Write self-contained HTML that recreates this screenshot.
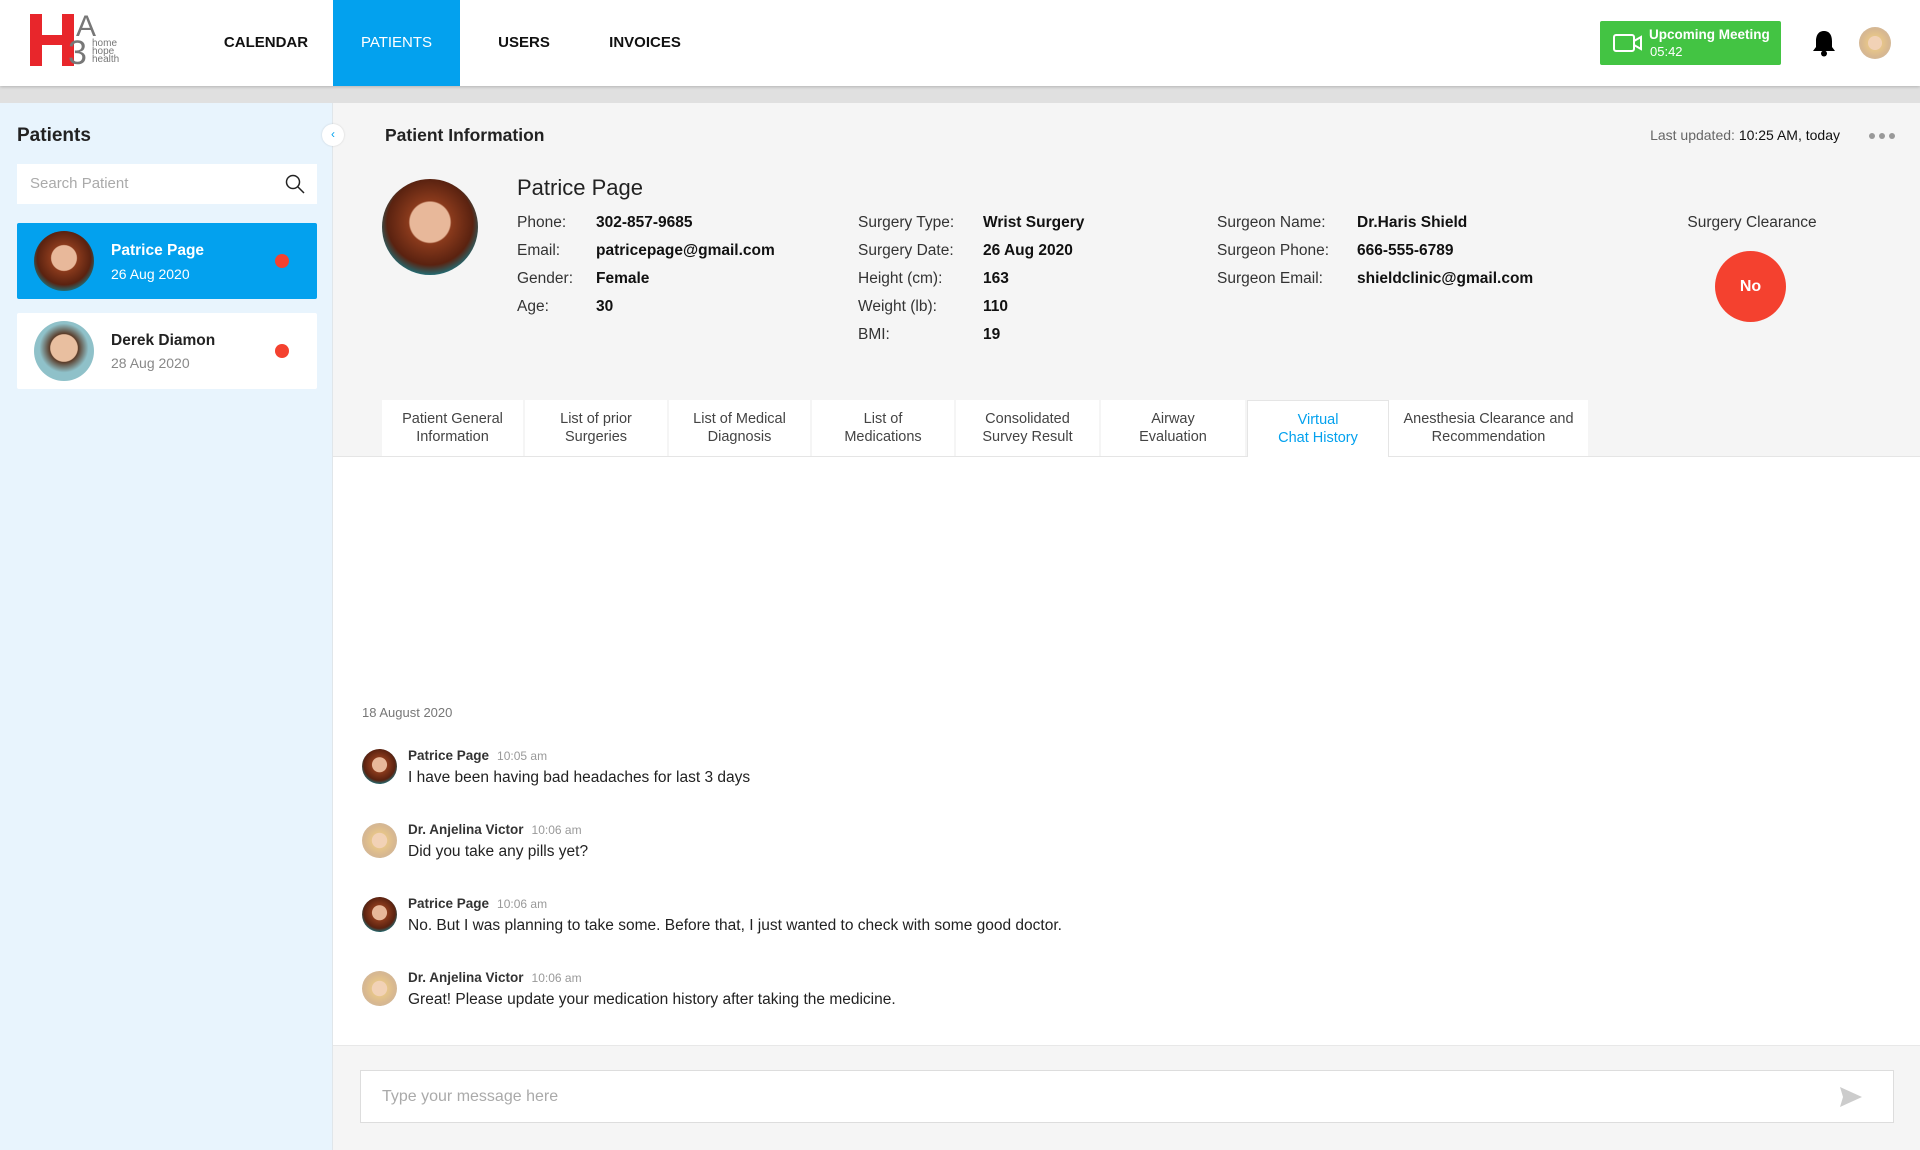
<!DOCTYPE html>
<html><head><meta charset="utf-8"><style>
*{box-sizing:border-box;margin:0;padding:0}
body{width:1920px;height:1150px;overflow:hidden;font-family:"Liberation Sans",sans-serif;background:#f5f5f5;position:relative;color:#222}
.abs{position:absolute}
.hdr{left:0;top:0;width:1920px;height:86px;background:#fff;box-shadow:0 1px 3px rgba(0,0,0,.2);z-index:2}
.nav{top:0;height:86px;line-height:86px;font-size:15px;font-weight:bold;color:#111;text-align:center}
.band{left:0;top:86px;width:1920px;height:17px;background:#e0e0e0}
.side{left:0;top:103px;width:333px;height:1047px;background:#e8f4fd;border-right:1px solid #e0e6ea}
.av{border-radius:50%}
.pp{background:radial-gradient(circle at 50% 45%,#e8b89a 0 28%,#8a3a1c 30%,#5a2210 60%,#1f6f78 75%,#2a2a2a 100%)}
.dd{background:radial-gradient(circle at 50% 45%,#e9bfa0 0 30%,#5a3b28 32%,#8fc1c9 55%,#8fc1c9 100%)}
.dr{background:radial-gradient(circle at 50% 50%,#f2d2b6 0 30%,#e6c58a 32%,#d8b890 60%,#c9b8a8 100%)}
.card{left:17px;width:300px;height:76px;border-radius:2px}
.dot{width:14px;height:14px;border-radius:50%;background:#f4412f}
.lbl{font-size:15.5px;color:#333}
.val{font-size:15.5px;font-weight:bold;color:#111}
.tab{top:400px;height:56px;background:#fff;font-size:14.5px;color:#444;text-align:center;display:flex;align-items:center;justify-content:center;line-height:18px;border-right:2px solid #f5f5f5}
.name{font-size:13.5px;font-weight:bold;color:#333}
.tm{font-size:12px;color:#999;font-weight:normal;margin-left:8px}
.msg{font-size:15.5px;color:#222}
</style></head><body>
<div class="abs hdr">
  <div class="abs" style="left:30px;top:14px;width:100px;height:54px">
    <div class="abs" style="left:0;top:0;width:12px;height:52px;background:#e8262b"></div>
    <div class="abs" style="left:32px;top:0;width:12px;height:52px;background:#e8262b"></div>
    <div class="abs" style="left:0;top:21px;width:44px;height:10px;background:#e8262b"></div>
    <div class="abs" style="left:46px;top:-4px;font-size:30px;color:#777">A</div>
    <div class="abs" style="left:38px;top:20px;font-size:34px;color:#777">3</div>
    <div class="abs" style="left:62px;top:26px;font-size:10px;line-height:8px;color:#777">home<br>hope<br>health</div>
  </div>
  <div class="abs nav" style="left:220px;width:92px">CALENDAR</div>
  <div class="abs nav" style="left:333px;width:127px;background:#03a1ee;color:#fff;font-weight:normal">PATIENTS</div>
  <div class="abs nav" style="left:490px;width:68px">USERS</div>
  <div class="abs nav" style="left:605px;width:80px">INVOICES</div>
  <div class="abs" style="left:1600px;top:21px;width:181px;height:44px;background:#43c443;border-radius:2px;color:#fff">
    <svg class="abs" style="left:13px;top:12px" width="30" height="20" viewBox="0 0 30 20"><rect x="1" y="2" width="20" height="16" rx="2" fill="none" stroke="#fff" stroke-width="2"/><path d="M21 8 L28 4 V16 L21 12" fill="none" stroke="#fff" stroke-width="2"/></svg>
    <div class="abs" style="left:49px;top:6px;font-size:13.5px;font-weight:bold">Upcoming Meeting</div>
    <div class="abs" style="left:50px;top:23px;font-size:13px">05:42</div>
  </div>
  <svg class="abs" style="left:1812px;top:29px" width="24" height="28" viewBox="0 0 24 28"><path d="M12 2 C6 2 4 7 4 12 V18 L1 22 H23 L20 18 V12 C20 7 18 2 12 2Z" fill="#000"/><circle cx="12" cy="24.5" r="3" fill="#000"/></svg>
  <div class="abs av dr" style="left:1859px;top:27px;width:32px;height:32px"></div>
</div>
<div class="abs band"></div>
<div class="abs side">
  <div class="abs" style="left:17px;top:22px;font-size:19px;font-weight:bold;color:#222">Patients</div>
  <div class="abs" style="left:17px;top:61px;width:300px;height:40px;background:#fff">
    <div class="abs" style="left:13px;top:11px;font-size:15px;color:#aaa">Search Patient</div>
    <svg class="abs" style="left:268px;top:10px" width="20" height="20" viewBox="0 0 20 20"><circle cx="8" cy="8" r="6.5" fill="none" stroke="#222" stroke-width="1.5"/><path d="M13 13 L19 19" stroke="#222" stroke-width="1.5"/></svg>
  </div>
  <div class="abs card" style="top:120px;background:#03a1ee">
    <div class="abs av pp" style="left:17px;top:8px;width:60px;height:60px"></div>
    <div class="abs" style="left:94px;top:19px;font-size:15.5px;font-weight:bold;color:#fff">Patrice Page</div>
    <div class="abs" style="left:94px;top:43px;font-size:14px;color:#fff">26 Aug 2020</div>
    <div class="abs dot" style="left:258px;top:31px"></div>
  </div>
  <div class="abs card" style="top:210px;background:#fff">
    <div class="abs av dd" style="left:17px;top:8px;width:60px;height:60px"></div>
    <div class="abs" style="left:94px;top:19px;font-size:15.5px;font-weight:bold;color:#222">Derek Diamon</div>
    <div class="abs" style="left:94px;top:42px;font-size:14px;color:#888">28 Aug 2020</div>
    <div class="abs dot" style="left:258px;top:31px"></div>
  </div>
</div>
<div class="abs" style="left:322px;top:124px;width:22px;height:22px;border-radius:50%;background:#fff;box-shadow:0 0 2px rgba(0,0,0,.15);color:#03a1ee;font-size:12px;text-align:center;line-height:21px;z-index:3">‹</div>

<div class="abs" style="left:385px;top:125px;font-size:17.5px;color:#222;font-weight:bold">Patient Information</div>
<div class="abs" style="left:1620px;top:127px;width:220px;text-align:right;font-size:14px;color:#666">Last updated: <span style="color:#111">10:25 AM, today</span></div>
<div class="abs" style="left:1869px;top:133px;font-size:0">
  <span style="display:inline-block;width:6px;height:6px;border-radius:50%;background:#999;margin-right:4px"></span><span style="display:inline-block;width:6px;height:6px;border-radius:50%;background:#999;margin-right:4px"></span><span style="display:inline-block;width:6px;height:6px;border-radius:50%;background:#999"></span>
</div>
<div class="abs av pp" style="left:382px;top:179px;width:96px;height:96px"></div>
<div class="abs" style="left:517px;top:175px;font-size:22px;color:#222">Patrice Page</div>

<div class="abs lbl" style="left:517px;top:209px;line-height:28px">Phone:<br>Email:<br>Gender:<br>Age:</div>
<div class="abs val" style="left:596px;top:209px;line-height:28px">302-857-9685<br>patricepage@gmail.com<br>Female<br>30</div>
<div class="abs lbl" style="left:858px;top:209px;line-height:28px">Surgery Type:<br>Surgery Date:<br>Height (cm):<br>Weight (lb):<br>BMI:</div>
<div class="abs val" style="left:983px;top:209px;line-height:28px">Wrist Surgery<br>26 Aug 2020<br>163<br>110<br>19</div>
<div class="abs lbl" style="left:1217px;top:209px;line-height:28px">Surgeon Name:<br>Surgeon Phone:<br>Surgeon Email:</div>
<div class="abs val" style="left:1357px;top:209px;line-height:28px">Dr.Haris Shield<br>666-555-6789<br>shieldclinic@gmail.com</div>
<div class="abs lbl" style="left:1652px;top:209px;width:200px;text-align:center;line-height:28px">Surgery Clearance</div>
<div class="abs" style="left:1715px;top:251px;width:71px;height:71px;border-radius:50%;background:#f4412f;color:#fff;font-weight:bold;font-size:16px;text-align:center;line-height:71px">No</div>

<div class="abs" style="left:333px;top:456px;width:1587px;height:589px;background:#fff;border-top:1px solid #e5e5e5"></div>
<div class="abs tab" style="left:382px;width:143px">Patient General<br>Information</div>
<div class="abs tab" style="left:525px;width:144px">List of prior<br>Surgeries</div>
<div class="abs tab" style="left:669px;width:143px">List of Medical<br>Diagnosis</div>
<div class="abs tab" style="left:812px;width:144px">List of<br>Medications</div>
<div class="abs tab" style="left:956px;width:145px">Consolidated<br>Survey Result</div>
<div class="abs tab" style="left:1101px;width:146px">Airway<br>Evaluation</div>
<div class="abs tab" style="left:1247px;width:142px;color:#03a1ee;border:1px solid #e5e5e5;border-bottom:none;height:57px">Virtual<br>Chat History</div>
<div class="abs tab" style="left:1389px;width:201px">Anesthesia Clearance and<br>Recommendation</div>

<div class="abs" style="left:362px;top:705px;font-size:13px;color:#777">18 August 2020</div>

<div class="abs av pp" style="left:362px;top:749px;width:35px;height:35px"></div>
<div class="abs name" style="left:408px;top:748px">Patrice Page<span class="tm">10:05 am</span></div>
<div class="abs msg" style="left:408px;top:769px">I have been having bad headaches for last 3 days</div>

<div class="abs av dr" style="left:362px;top:823px;width:35px;height:35px"></div>
<div class="abs name" style="left:408px;top:822px">Dr. Anjelina Victor<span class="tm">10:06 am</span></div>
<div class="abs msg" style="left:408px;top:843px">Did you take any pills yet?</div>

<div class="abs av pp" style="left:362px;top:897px;width:35px;height:35px"></div>
<div class="abs name" style="left:408px;top:896px">Patrice Page<span class="tm">10:06 am</span></div>
<div class="abs msg" style="left:408px;top:917px">No. But I was planning to take some. Before that, I just wanted to check with some good doctor.</div>

<div class="abs av dr" style="left:362px;top:971px;width:35px;height:35px"></div>
<div class="abs name" style="left:408px;top:970px">Dr. Anjelina Victor<span class="tm">10:06 am</span></div>
<div class="abs msg" style="left:408px;top:991px">Great! Please update your medication history after taking the medicine.</div>

<div class="abs" style="left:333px;top:1045px;width:1587px;height:105px;background:#f5f5f5;border-top:1px solid #e8e8e8"></div>
<div class="abs" style="left:360px;top:1070px;width:1534px;height:53px;background:#fff;border:1px solid #ddd">
  <div class="abs" style="left:21px;top:17px;font-size:16px;color:#aaa">Type your message here</div>
  <svg class="abs" style="left:1478px;top:15px" width="24" height="22" viewBox="0 0 24 22"><path d="M1 1 L23 11 L1 21 L4 11 Z" fill="#ccc"/></svg>
</div>
</body></html>
